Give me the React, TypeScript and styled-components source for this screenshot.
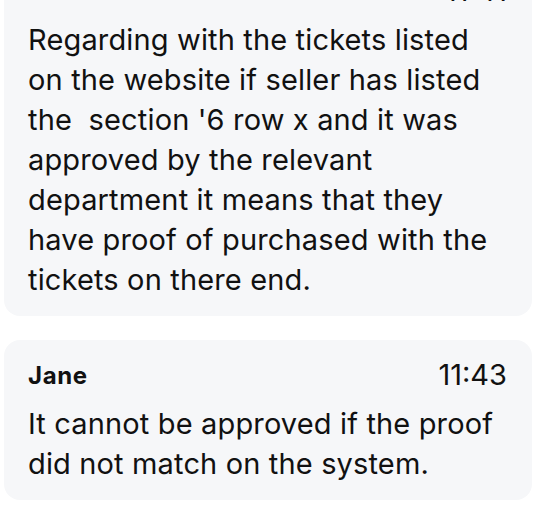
import styled, { createGlobalStyle } from 'styled-components'

const GlobalStyle = createGlobalStyle`
  html, body {
    margin: 0;
    padding: 0;
    background: #ffffff;
  }
  body {
    font-family: Inter, 'Noto Sans', sans-serif;
    color: #111111;
    overflow: hidden;
  }
`

const StyledThreadDiv = styled.div`
  display: flex;
  flex-direction: column;
  gap: 24px;
  width: 528px;
  margin-top: -44px;
  padding-left: 4px;
`

const StyledCardDiv = styled.div`
  background-color: #f6f7f9;
  border-radius: 16px;
  padding: 20px 24px 16px 24px;
  display: flex;
  flex-direction: column;
  gap: 14px;
`

const StyledHeaderRow = styled.div`
  display: flex;
  justify-content: space-between;
  align-items: center;
  height: 30px;
  padding-right: 1px;
`

const StyledAuthor = styled.span`
  font-size: 24px;
  font-weight: 700;
  letter-spacing: 0.6px;
`

const StyledTime = styled.span`
  font-size: 29px;
  font-weight: 400;
  line-height: 30px;
`

const StyledBody = styled.p`
  margin: 0;
  font-size: 29px;
  line-height: 40px;
  letter-spacing: 0.15px;
  white-space: pre-wrap;
`

interface Message {
  author: string
  time: string
  text: string
}

const messages: Message[] = [
  {
    author: 'John',
    time: '11:41',
    text:
      "Regarding with the tickets listed on the website if seller has listed the  section '6 row x and it was approved by the relevant department it means that they have proof of purchased with the tickets on there end.",
  },
  {
    author: 'Jane',
    time: '11:43',
    text: 'It cannot be approved if the proof did not match on the system.',
  },
]

function MessageCard({ author, time, text }: Message) {
  return (
    <StyledCardDiv>
      <StyledHeaderRow>
        <StyledAuthor>{author}</StyledAuthor>
        <StyledTime>{time}</StyledTime>
      </StyledHeaderRow>
      <StyledBody>{text}</StyledBody>
    </StyledCardDiv>
  )
}

export default function App() {
  return (
    <>
      <GlobalStyle />
      <StyledThreadDiv>
        {messages.map((m) => (
          <MessageCard key={m.time} {...m} />
        ))}
      </StyledThreadDiv>
    </>
  )
}
